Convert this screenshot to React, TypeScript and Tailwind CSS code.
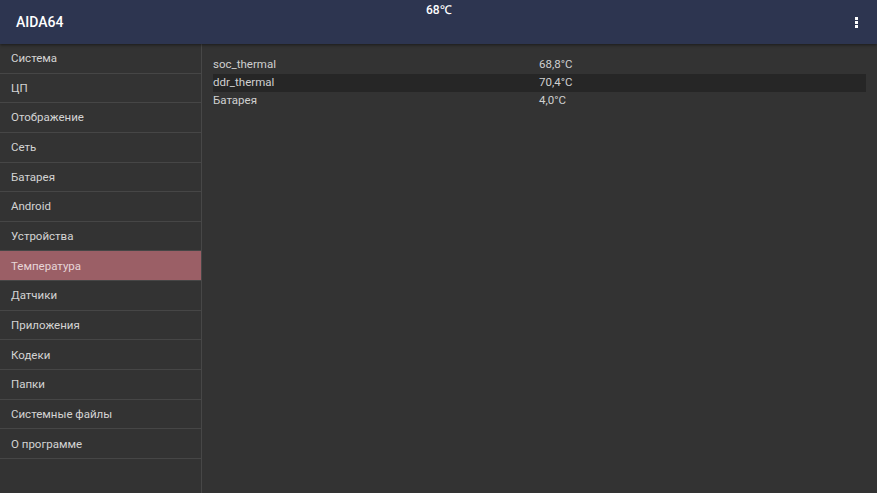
import React from 'react';

const menu = [
  'Система',
  'ЦП',
  'Отображение',
  'Сеть',
  'Батарея',
  'Android',
  'Устройства',
  'Температура',
  'Датчики',
  'Приложения',
  'Кодеки',
  'Папки',
  'Системные файлы',
  'О программе',
];

const rows = [
  { name: 'soc_thermal', value: '68,8°C' },
  { name: 'ddr_thermal', value: '70,4°C' },
  { name: 'Батарея', value: '4,0°C' },
];

export default function App() {
  const selected = 'Температура';

  return (
    <div className="w-[877px] h-[493px] flex flex-col bg-[#333333] overflow-hidden" style={{ fontFamily: 'Roboto, "Noto Sans", sans-serif' }}>
      {/* Toolbar */}
      <div className="relative h-[44px] shrink-0 bg-[#2d3550] flex items-center px-4 shadow-[0_1px_3px_rgba(0,0,0,0.5)] z-10">
        <span className="text-white text-[14px] font-medium">AIDA64</span>
        <span className="absolute left-[426px] top-[1px] text-white text-[12px] font-medium">68℃</span>
        <div className="ml-auto flex flex-col gap-[1.5px] mr-[3px] mt-[1px]">
          <span className="w-[3px] h-[2.5px] bg-white" />
          <span className="w-[3px] h-[2.5px] bg-white" />
          <span className="w-[3px] h-[2.5px] bg-white" />
        </div>
      </div>

      <div className="flex flex-1 min-h-0">
        {/* Sidebar */}
        <div className="w-[202px] shrink-0 border-r border-[#474747] flex flex-col">
          {menu.map((item) => (
            <div
              key={item}
              className={`h-[29.65px] shrink-0 flex items-center px-[11px] pt-[1px] text-[11.5px] border-b border-[#464646] ${
                item === selected ? 'bg-[#9b5f66] text-[#e6d6d8]' : 'text-[#d4d4d4]'
              }`}
            >
              {item}
            </div>
          ))}
        </div>

        {/* Content */}
        <div className="flex-1 pt-[12px] pl-[11px] pr-[11px]">
          {rows.map((r, i) => (
            <div
              key={r.name}
              className={`h-[18px] flex items-center text-[11.5px] text-[#d0d0d0] ${i === 1 ? 'bg-[#262626]' : ''}`}
            >
              <span className="w-[326px]">{r.name}</span>
              <span>{r.value}</span>
            </div>
          ))}
        </div>
      </div>
    </div>
  );
}
